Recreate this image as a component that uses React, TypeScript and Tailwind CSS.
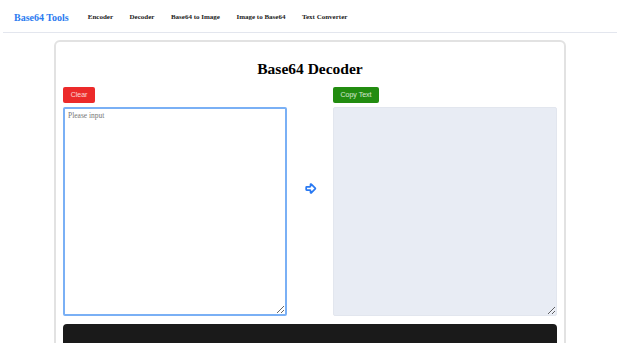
import { ArrowBigRight } from "lucide-react";

const links = ["Encoder", "Decoder", "Base64 to Image", "Image to Base64", "Text Converter"];

export default function App() {
  return (
    <div className="min-h-screen bg-white font-['Liberation_Serif',serif] text-black">
      <nav className="mx-[3px] flex h-[33px] items-center border-b border-[#e3e6ee] pl-[11px] pt-[2px]">
        <span className="text-[10px] font-bold text-[#2b7bf0]">Base64 Tools</span>
        <div className="ml-[19px] flex gap-[16.5px] text-[7px] font-bold text-[#222]">
          {links.map((l) => (
            <span key={l}>{l}</span>
          ))}
        </div>
      </nav>
      <main className="mx-auto mt-[7px] w-[512px] rounded-[6px] border-2 border-[#e2e2e2] px-[7px] pb-[20px]">
        <h1 className="pt-[16px] text-center text-[15.5px] font-bold leading-[22px]">Base64 Decoder</h1>
        <div className="mt-[7px] flex">
          <div className="flex w-[224px] flex-col">
            <button className="h-[16px] w-[32px] rounded-[2px] bg-[#ec2a2a] font-['Liberation_Sans',sans-serif] text-[7px] text-white/80">
              Clear
            </button>
            <textarea
              placeholder="Please input"
              className="mt-[4px] h-[209px] w-[224px] rounded-[2px] border-2 border-[#7ab0f5] px-[3px] py-[1px] text-[7.5px] outline-none placeholder:text-[#777]"
            />
          </div>
          <div className="flex flex-1 justify-center pt-[95px]">
            <ArrowBigRight className="h-[13px] w-[13px] text-[#2979f2]" strokeWidth={3.2} />
          </div>
          <div className="flex w-[224px] flex-col">
            <button className="h-[16px] w-[46px] rounded-[2px] bg-[#228c10] font-['Liberation_Sans',sans-serif] text-[7px] text-white/80">
              Copy Text
            </button>
            <textarea
              readOnly
              className="mt-[4px] h-[209px] w-[224px] rounded-[2px] border border-[#e2e6ee] bg-[#e8ecf4] outline-none"
            />
          </div>
        </div>
        <div className="mt-[8px] h-[60px] rounded-[4px] bg-[#1a1a1a]" />
      </main>
    </div>
  );
}
